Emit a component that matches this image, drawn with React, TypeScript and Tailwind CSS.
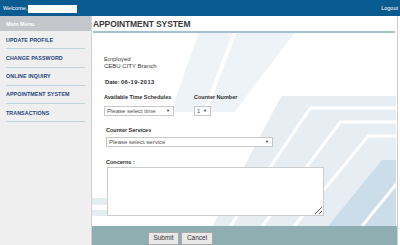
import React from 'react';

const menuItems = [
  'UPDATE PROFILE',
  'CHANGE PASSWORD',
  'ONLINE INQUIRY',
  'APPOINTMENT SYSTEM',
  'TRANSACTIONS',
];

// Pale swoosh artwork behind the form
const Backdrop = () => (
  <svg
    className="absolute inset-0 w-full h-full"
    viewBox="93 16 306 229"
    preserveAspectRatio="none"
  >
    <polygon points="200,33 296,33 236,112 172,112" fill="#edf3f7" />
    <polyline points="236,33 206,112" fill="none" stroke="#ffffff" strokeWidth="4" />
    <polygon points="283,96 398,96 398,226 214,226" fill="#e6eef3" />
    <polyline points="398,108 312,108 232,226" fill="none" stroke="#ffffff" strokeWidth="3" />
    <polyline points="398,122 342,122 264,226" fill="none" stroke="#ffffff" strokeWidth="3" />
    <polyline points="398,136 370,136 296,226" fill="none" stroke="#ffffff" strokeWidth="3" />
    <polygon points="384,160 398,160 398,226 330,226" fill="#cbdde8" />
    <polyline points="400,182 364,226" fill="none" stroke="#ffffff" strokeWidth="3" />
    <rect x="93" y="198" width="16" height="7" fill="#e4edf2" />
    <rect x="93" y="210" width="16" height="6" fill="#e4edf2" />
  </svg>
);

const FakeSelect = ({ label, width }: { label: string; width: string }) => (
  <div
    className={`${width} h-[10px] bg-white border border-[#c8c8c8] flex items-center justify-between pl-[2px] pr-[3px] text-[6px] text-[#505050] leading-none`}
  >
    <span>{label}</span>
    <span className="text-[4px] text-[#333]">▼</span>
  </div>
);

export default function App() {
  return (
    <div className="w-[400px] h-[245px] flex flex-col bg-white overflow-hidden font-['Liberation_Sans',Arial,sans-serif]">
      {/* Top bar */}
      <header className="h-[16px] shrink-0 bg-[#0a5b8f] flex items-center justify-between pl-[3px] pr-[2px] pt-[2px]">
        <div className="flex items-center gap-[1px]">
          <span className="text-white text-[5.5px] leading-none">Welcome,</span>
          <div className="w-[49px] h-[8px] bg-white" />
        </div>
        <span className="text-white text-[5.5px] leading-none">Logout</span>
      </header>

      <div className="flex flex-1 min-h-0">
        {/* Sidebar */}
        <aside className="w-[92px] shrink-0 bg-[#efefef] border-r border-[#d2d2d2]">
          <div className="h-[15px] bg-[#c3c7cb] flex items-center px-[6px] pt-[2px] text-white font-bold text-[5.5px] leading-none">
            Main Menu
          </div>
          <nav className="px-[6px]">
            {menuItems.map((item) => (
              <div
                key={item}
                className="h-[18.3px] border-b border-[#bfd4df] flex items-center pt-[1px] text-[5.3px] font-bold text-[#24447f] leading-none tracking-[0.1px]"
              >
                {item}
              </div>
            ))}
          </nav>
        </aside>

        {/* Main area */}
        <main className="relative w-[306px] shrink-0 border-r border-[#cfcfcf] flex flex-col">
          <Backdrop />

          <div className="relative flex flex-col flex-1">
            <div className="h-[15px] flex items-center pl-[1px] pt-[2px] text-[8.5px] font-bold text-[#3a3a3a] leading-none tracking-[-0.1px]">
              APPOINTMENT SYSTEM
            </div>
            <div className="h-[2px] ml-[1px] mr-[2px] bg-[#a3c1cf]" />

            <div className="pl-[12px] text-[#3c3c3c]">
              <div className="mt-[23px] text-[6px] leading-[7px]">Employed</div>
              <div className="text-[6px] leading-[7px]">CEBU CITY Branch</div>

              <div className="mt-[9px] flex text-[5.8px] leading-[7px] font-bold text-[#2e2e2e]">
                <span className="pl-[1px] w-[17px]">Date:</span>
                <span className="tracking-[0.4px]">06-19-2013</span>
              </div>

              <div className="mt-[8px] flex">
                <div className="w-[90px]">
                  <div className="text-[5.5px] leading-[7px] font-bold text-[#2e2e2e]">
                    Available Time Schedules
                  </div>
                  <div className="mt-[4.5px]">
                    <FakeSelect label="Please select time" width="w-[70px]" />
                  </div>
                </div>
                <div>
                  <div className="text-[5.5px] leading-[7px] font-bold text-[#2e2e2e]">
                    Counter Number
                  </div>
                  <div className="mt-[4.5px]">
                    <FakeSelect label="1" width="w-[17px]" />
                  </div>
                </div>
              </div>

              <div className="pl-[2px]">
                <div className="mt-[11.5px] text-[5.5px] leading-[7px] font-bold text-[#2e2e2e]">
                  Counter Services
                </div>
                <div className="mt-[3px]">
                  <FakeSelect label="Please select service" width="w-[167px]" />
                </div>

                <div className="mt-[12px] text-[5.5px] leading-[7px] font-bold text-[#2e2e2e]">
                  Concerns :
                </div>
                <textarea className="block mt-[0.5px] ml-[1px] w-[217px] h-[49px] bg-white border border-[#cccccc] outline-none" />
              </div>
            </div>

            <footer className="mt-auto h-[19px] bg-[#8faeb1] flex items-start gap-[2px] pl-[56px] pt-[6px]">
              <button className="h-[13px] w-[31px] bg-[#e9e9e9] border border-[#a9a9a9] text-[6.5px] text-[#333] leading-none">
                Submit
              </button>
              <button className="h-[13px] w-[32px] bg-[#e9e9e9] border border-[#a9a9a9] text-[6.5px] text-[#333] leading-none">
                Cancel
              </button>
            </footer>
          </div>
        </main>
      </div>
    </div>
  );
}
